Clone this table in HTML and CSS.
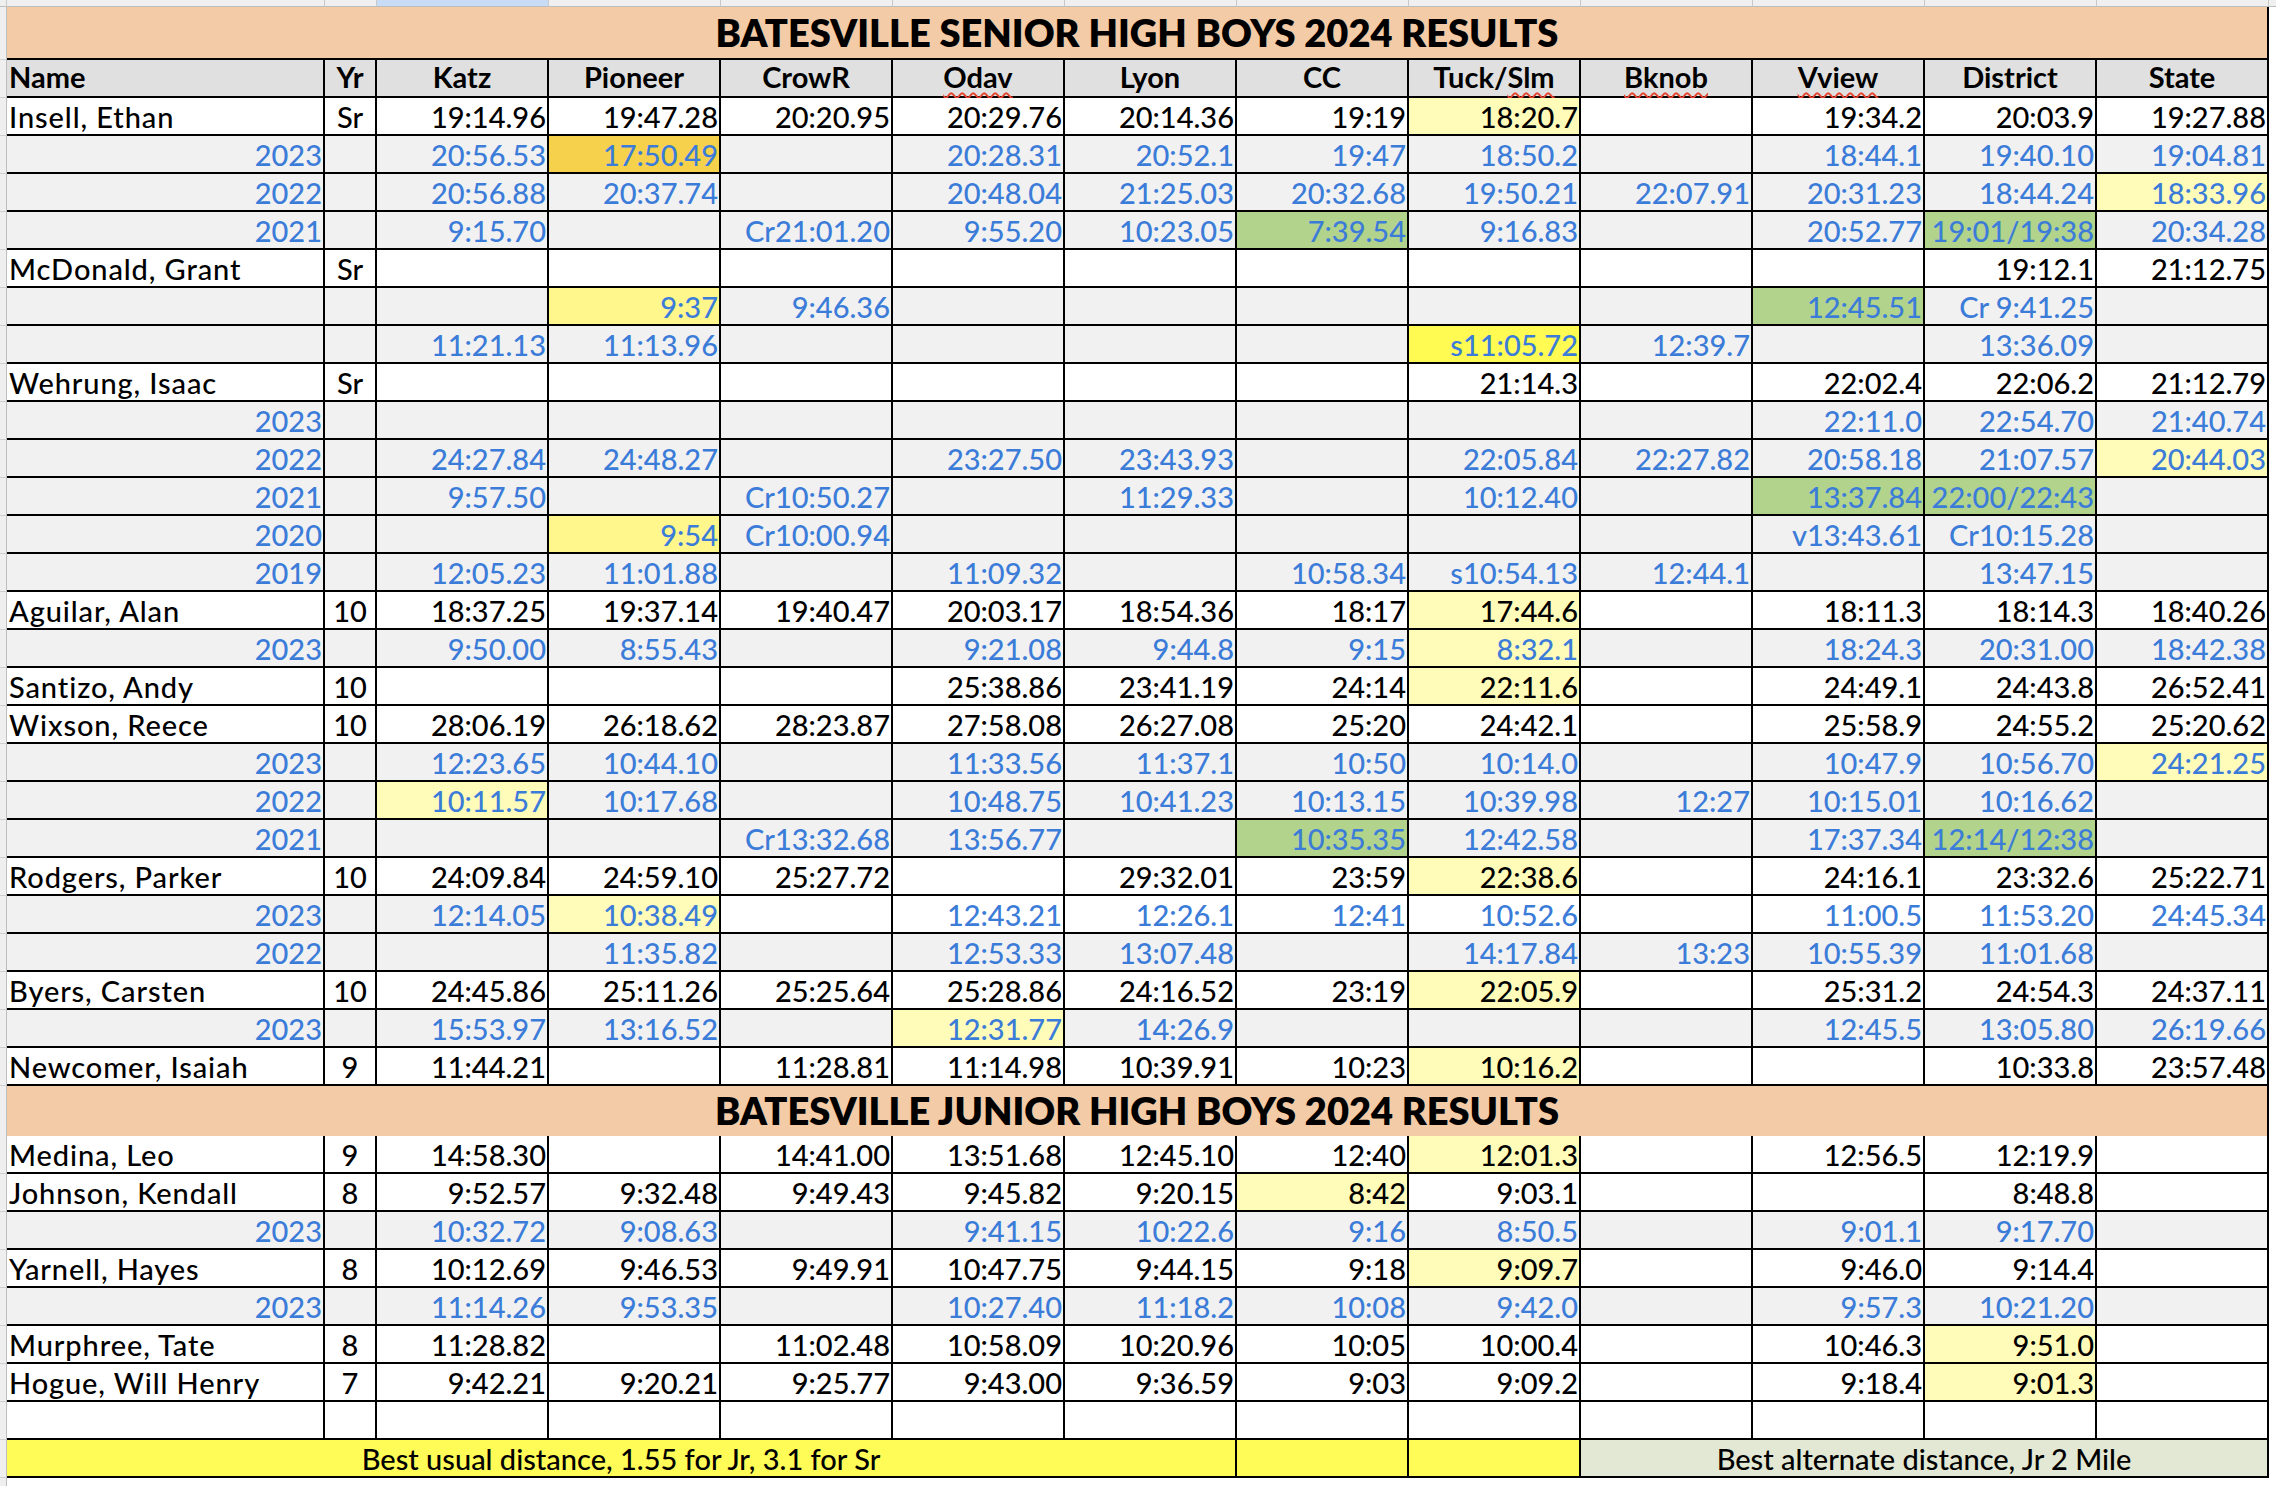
FILE: index.html
```html
<!DOCTYPE html>
<html lang="en">
<head>
<meta charset="utf-8">
<title>Batesville Boys 2024 Results</title>
<link rel="stylesheet" href="styles.css">
</head>
<body>
<div class="sheet">
  <div class="strip"><div></div><div></div><div></div><div class="sel"></div><div></div><div></div><div></div><div></div><div></div><div></div><div></div><div></div><div></div><div></div><div class="end"></div></div>

  <div class="row title sr"><div class="band">BATESVILLE SENIOR HIGH BOYS 2024 RESULTS</div></div>

  <div class="row hdr"><div class="nm">Name</div><div class="yr">Yr</div><div>Katz</div><div>Pioneer</div><div>CrowR</div><div><span class="sp">Odav</span></div><div>Lyon</div><div>CC</div><div>Tuck/<span class="sp">Slm</span></div><div><span class="sp">Bknob</span></div><div><span class="sp">Vview</span></div><div>District</div><div>State</div></div>

  <div class="row m"><div class="nm">Insell, Ethan</div><div class="yr">Sr</div><div>19:14.96</div><div>19:47.28</div><div>20:20.95</div><div>20:29.76</div><div>20:14.36</div><div>19:19</div><div class="ly">18:20.7</div><div></div><div>19:34.2</div><div>20:03.9</div><div>19:27.88</div></div>
  <div class="row s"><div class="nm">2023</div><div></div><div>20:56.53</div><div class="or">17:50.49</div><div></div><div>20:28.31</div><div>20:52.1</div><div>19:47</div><div>18:50.2</div><div></div><div>18:44.1</div><div>19:40.10</div><div>19:04.81</div></div>
  <div class="row s"><div class="nm">2022</div><div></div><div>20:56.88</div><div>20:37.74</div><div></div><div>20:48.04</div><div>21:25.03</div><div>20:32.68</div><div>19:50.21</div><div>22:07.91</div><div>20:31.23</div><div>18:44.24</div><div class="ly">18:33.96</div></div>
  <div class="row s"><div class="nm">2021</div><div></div><div>9:15.70</div><div></div><div>Cr21:01.20</div><div>9:55.20</div><div>10:23.05</div><div class="gr">7:39.54</div><div>9:16.83</div><div></div><div>20:52.77</div><div class="gr">19:01/19:38</div><div>20:34.28</div></div>

  <div class="row m"><div class="nm">McDonald, Grant</div><div class="yr">Sr</div><div></div><div></div><div></div><div></div><div></div><div></div><div></div><div></div><div></div><div>19:12.1</div><div>21:12.75</div></div>
  <div class="row s"><div class="nm"></div><div></div><div></div><div class="my">9:37</div><div>9:46.36</div><div></div><div></div><div></div><div></div><div></div><div class="gr">12:45.51</div><div>Cr 9:41.25</div><div></div></div>
  <div class="row s"><div class="nm"></div><div></div><div>11:21.13</div><div>11:13.96</div><div></div><div></div><div></div><div></div><div class="by">s11:05.72</div><div>12:39.7</div><div></div><div>13:36.09</div><div></div></div>

  <div class="row m"><div class="nm">Wehrung, Isaac</div><div class="yr">Sr</div><div></div><div></div><div></div><div></div><div></div><div></div><div>21:14.3</div><div></div><div>22:02.4</div><div>22:06.2</div><div>21:12.79</div></div>
  <div class="row s"><div class="nm">2023</div><div></div><div></div><div></div><div></div><div></div><div></div><div></div><div></div><div></div><div>22:11.0</div><div>22:54.70</div><div>21:40.74</div></div>
  <div class="row s"><div class="nm">2022</div><div></div><div>24:27.84</div><div>24:48.27</div><div></div><div>23:27.50</div><div>23:43.93</div><div></div><div>22:05.84</div><div>22:27.82</div><div>20:58.18</div><div>21:07.57</div><div class="ly">20:44.03</div></div>
  <div class="row s"><div class="nm">2021</div><div></div><div>9:57.50</div><div></div><div>Cr10:50.27</div><div></div><div>11:29.33</div><div></div><div>10:12.40</div><div></div><div class="gr">13:37.84</div><div class="gr">22:00/22:43</div><div></div></div>
  <div class="row s"><div class="nm">2020</div><div></div><div></div><div class="my">9:54</div><div>Cr10:00.94</div><div></div><div></div><div></div><div></div><div></div><div>v13:43.61</div><div>Cr10:15.28</div><div></div></div>
  <div class="row s"><div class="nm">2019</div><div></div><div>12:05.23</div><div>11:01.88</div><div></div><div>11:09.32</div><div></div><div>10:58.34</div><div>s10:54.13</div><div>12:44.1</div><div></div><div>13:47.15</div><div></div></div>

  <div class="row m"><div class="nm">Aguilar, Alan</div><div class="yr">10</div><div>18:37.25</div><div>19:37.14</div><div>19:40.47</div><div>20:03.17</div><div>18:54.36</div><div>18:17</div><div class="ly">17:44.6</div><div></div><div>18:11.3</div><div>18:14.3</div><div>18:40.26</div></div>
  <div class="row s"><div class="nm">2023</div><div></div><div>9:50.00</div><div>8:55.43</div><div></div><div>9:21.08</div><div>9:44.8</div><div>9:15</div><div class="ly">8:32.1</div><div></div><div>18:24.3</div><div>20:31.00</div><div>18:42.38</div></div>

  <div class="row m"><div class="nm">Santizo, Andy</div><div class="yr">10</div><div></div><div></div><div></div><div>25:38.86</div><div>23:41.19</div><div>24:14</div><div class="ly">22:11.6</div><div></div><div>24:49.1</div><div>24:43.8</div><div>26:52.41</div></div>

  <div class="row m"><div class="nm">Wixson, Reece</div><div class="yr">10</div><div>28:06.19</div><div>26:18.62</div><div>28:23.87</div><div>27:58.08</div><div>26:27.08</div><div>25:20</div><div>24:42.1</div><div></div><div>25:58.9</div><div>24:55.2</div><div>25:20.62</div></div>
  <div class="row s"><div class="nm">2023</div><div></div><div>12:23.65</div><div>10:44.10</div><div></div><div>11:33.56</div><div>11:37.1</div><div>10:50</div><div>10:14.0</div><div></div><div>10:47.9</div><div>10:56.70</div><div class="ly">24:21.25</div></div>
  <div class="row s"><div class="nm">2022</div><div></div><div class="ly">10:11.57</div><div>10:17.68</div><div></div><div>10:48.75</div><div>10:41.23</div><div>10:13.15</div><div>10:39.98</div><div>12:27</div><div>10:15.01</div><div>10:16.62</div><div></div></div>
  <div class="row s"><div class="nm">2021</div><div></div><div></div><div></div><div>Cr13:32.68</div><div>13:56.77</div><div></div><div class="gr">10:35.35</div><div>12:42.58</div><div></div><div>17:37.34</div><div class="gr">12:14/12:38</div><div></div></div>

  <div class="row m"><div class="nm">Rodgers, Parker</div><div class="yr">10</div><div>24:09.84</div><div>24:59.10</div><div>25:27.72</div><div></div><div>29:32.01</div><div>23:59</div><div class="ly">22:38.6</div><div></div><div>24:16.1</div><div>23:32.6</div><div>25:22.71</div></div>
  <div class="row s"><div class="nm">2023</div><div></div><div>12:14.05</div><div class="ly">10:38.49</div><div class="w"></div><div class="w">12:43.21</div><div class="w">12:26.1</div><div class="w">12:41</div><div class="w">10:52.6</div><div class="w"></div><div class="w">11:00.5</div><div class="w">11:53.20</div><div class="w">24:45.34</div></div>
  <div class="row s"><div class="nm">2022</div><div></div><div></div><div>11:35.82</div><div></div><div>12:53.33</div><div>13:07.48</div><div></div><div>14:17.84</div><div>13:23</div><div>10:55.39</div><div>11:01.68</div><div></div></div>

  <div class="row m"><div class="nm">Byers, Carsten</div><div class="yr">10</div><div>24:45.86</div><div>25:11.26</div><div>25:25.64</div><div>25:28.86</div><div>24:16.52</div><div>23:19</div><div class="ly">22:05.9</div><div></div><div>25:31.2</div><div>24:54.3</div><div>24:37.11</div></div>
  <div class="row s"><div class="nm">2023</div><div></div><div>15:53.97</div><div>13:16.52</div><div></div><div class="ly">12:31.77</div><div>14:26.9</div><div></div><div></div><div></div><div>12:45.5</div><div>13:05.80</div><div>26:19.66</div></div>

  <div class="row m"><div class="nm">Newcomer, Isaiah</div><div class="yr">9</div><div>11:44.21</div><div></div><div>11:28.81</div><div>11:14.98</div><div>10:39.91</div><div>10:23</div><div class="ly">10:16.2</div><div></div><div></div><div>10:33.8</div><div>23:57.48</div></div>

  <div class="row title jr"><div class="band">BATESVILLE JUNIOR HIGH BOYS 2024 RESULTS</div></div>

  <div class="row m"><div class="nm">Medina, Leo</div><div class="yr">9</div><div>14:58.30</div><div></div><div>14:41.00</div><div>13:51.68</div><div>12:45.10</div><div>12:40</div><div class="ly">12:01.3</div><div></div><div>12:56.5</div><div>12:19.9</div><div></div></div>
  <div class="row m"><div class="nm">Johnson, Kendall</div><div class="yr">8</div><div>9:52.57</div><div>9:32.48</div><div>9:49.43</div><div>9:45.82</div><div>9:20.15</div><div class="ly">8:42</div><div>9:03.1</div><div></div><div></div><div>8:48.8</div><div></div></div>
  <div class="row s"><div class="nm">2023</div><div></div><div>10:32.72</div><div>9:08.63</div><div></div><div>9:41.15</div><div>10:22.6</div><div>9:16</div><div>8:50.5</div><div></div><div>9:01.1</div><div>9:17.70</div><div></div></div>
  <div class="row m"><div class="nm">Yarnell, Hayes</div><div class="yr">8</div><div>10:12.69</div><div>9:46.53</div><div>9:49.91</div><div>10:47.75</div><div>9:44.15</div><div>9:18</div><div class="ly">9:09.7</div><div></div><div>9:46.0</div><div>9:14.4</div><div></div></div>
  <div class="row s"><div class="nm">2023</div><div></div><div>11:14.26</div><div>9:53.35</div><div></div><div>10:27.40</div><div>11:18.2</div><div>10:08</div><div>9:42.0</div><div></div><div>9:57.3</div><div>10:21.20</div><div></div></div>
  <div class="row m"><div class="nm">Murphree, Tate</div><div class="yr">8</div><div>11:28.82</div><div></div><div>11:02.48</div><div>10:58.09</div><div>10:20.96</div><div>10:05</div><div>10:00.4</div><div></div><div>10:46.3</div><div class="ly">9:51.0</div><div></div></div>
  <div class="row m"><div class="nm">Hogue, Will Henry</div><div class="yr">7</div><div>9:42.21</div><div>9:20.21</div><div>9:25.77</div><div>9:43.00</div><div>9:36.59</div><div>9:03</div><div>9:09.2</div><div></div><div>9:18.4</div><div class="ly">9:01.3</div><div></div></div>
  <div class="row m"><div class="nm"></div><div></div><div></div><div></div><div></div><div></div><div></div><div></div><div></div><div></div><div></div><div></div><div></div></div>

  <div class="row ft"><div class="usual">Best usual distance, 1.55 for Jr, 3.1 for Sr</div><div class="fy"></div><div class="fy"></div><div class="alt">Best alternate distance, Jr 2 Mile</div></div>

  <div class="row tail"></div>
</div>
</body>
</html>
```

FILE: styles.css
```css
html, body {
  margin: 0;
  padding: 0;
  background: #ffffff;
}

body {
  font-family: Lato, "Liberation Sans", sans-serif;
  color: #000000;
}

.sheet {
  width: 2276px;
  --cols: 7px 318px 52px repeat(11, 172px) 1fr;
}

/* spreadsheet column-letter strip */
.strip {
  display: grid;
  grid-template-columns: var(--cols);
  height: 7px;
}

.strip > div {
  box-sizing: border-box;
  background: #f0f0f0;
  border-right: 1px solid #c9c9c9;
  border-bottom: 1px solid #bdbdbd;
}

.strip > .sel {
  background: #c9dcf6;
}

.strip > .end {
  border-right: none;
}

/* rows */
.row {
  display: grid;
  grid-template-columns: var(--cols);
  height: 38px;
}

.row::before {
  content: "";
  box-sizing: border-box;
  background: #efefef;
  border-right: 1px solid #bdbdbd;
  border-bottom: 1px solid #cfcfcf;
}

.row > div {
  box-sizing: border-box;
  border-right: 2px solid #000000;
  border-bottom: 2px solid #000000;
  background: #ffffff;
  font-size: 29px;
  font-weight: 500;
  line-height: 34px;
  padding: 2px 1px 0 1px;
  text-align: right;
  white-space: nowrap;
  overflow: visible;
}

.row > .nm {
  text-align: left;
  padding-left: 2px;
  letter-spacing: 0.9px;
}

.row > .yr {
  text-align: center;
}

/* title bands */
.row.title {
  height: 53px;
}

.row.title.jr {
  height: 50px;
}

.row > .band {
  grid-column: 2 / 15;
  background: #f3cba7;
  display: flex;
  align-items: flex-end;
  justify-content: center;
  font-size: 38px;
  font-weight: 800;
  line-height: 48px;
  padding: 0 0 2px 0;
}

/* header row */
.row.hdr > div {
  background: #e0e0e0;
  font-weight: 700;
  text-align: center;
  padding-top: 0;
}

.row.hdr > .nm {
  text-align: left;
  letter-spacing: 0;
}

.sp {
  text-decoration: underline wavy #e3432c;
  text-decoration-thickness: 2px;
  text-underline-offset: 4px;
  text-decoration-skip-ink: none;
}

/* sub rows (previous years) */
.row.s > div {
  background: #f1f1f1;
  color: #3c7cd9;
}

.row.s > .nm {
  text-align: right;
  letter-spacing: 0;
}

.row > div.w {
  background: #ffffff;
}

/* highlights */
.row > div.ly {
  background: #fffbb9;
}

.row > div.my {
  background: #fff78c;
}

.row > div.by {
  background: #fffb52;
}

.row > div.or {
  background: #f6d24c;
}

.row > div.gr {
  background: #b2d38b;
}

/* footer row */
.row.ft > div {
  text-align: center;
}

.row > .usual {
  grid-column: 2 / 9;
  background: #fffb57;
}

.row > .fy {
  background: #fffb57;
}

.row > .alt {
  grid-column: 11 / 15;
  background: #e2e8d3;
}

.row.tail {
  height: 8px;
}

.row.tail::before {
  border-bottom: none;
}
```
